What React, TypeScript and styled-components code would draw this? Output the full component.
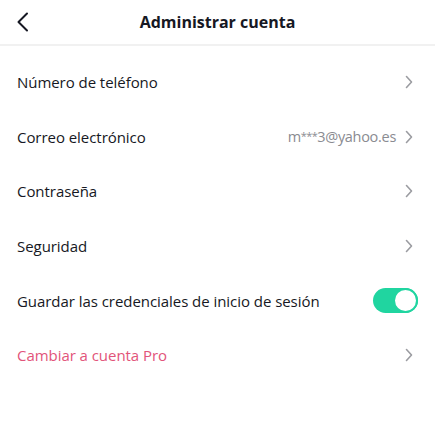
import React from "react";
import styled, { createGlobalStyle } from "styled-components";

const Global = createGlobalStyle`
  html, body { margin: 0; padding: 0; background: #fff; }
  body { font-family: "Open Sans", "Noto Sans", sans-serif; -webkit-font-smoothing: antialiased; }
`;

const Page = styled.div`
  width: 435px;
  height: 445px;
  background: #fff;
  display: flex;
  flex-direction: column;
`;

const Header = styled.header`
  height: 44px;
  display: grid;
  grid-template-columns: 48px 1fr 48px;
  align-items: center;
  border-bottom: 2px solid #f1f1f1;
`;

const BackButton = styled.button`
  border: 0;
  background: none;
  padding: 0 0 0 16px;
  height: 44px;
  display: flex;
  align-items: center;
  color: #161823;
`;

const Title = styled.h1`
  margin: 0;
  text-align: center;
  font-size: 16px;
  font-weight: 700;
  color: #161823;
`;

const List = styled.div`
  display: flex;
  flex-direction: column;
  padding-top: 9px;
`;

const Row = styled.div`
  height: 54.6px;
  display: flex;
  align-items: center;
  padding: 0 22px 0 17px;
`;

const Label = styled.span<{ $accent?: boolean }>`
  flex: 1;
  font-size: 15px;
  color: ${(p) => (p.$accent ? "#e2547a" : "#161823")};
  letter-spacing: -0.05px;
`;

const Value = styled.span`
  font-size: 14.5px;
  color: #8a8b91;
  margin-right: 9px;
  letter-spacing: -0.3px;
`;

const Stars = styled.span`
  font-size: 11px;
  letter-spacing: -0.6px;
  vertical-align: 2px;
`;

const Chevron = styled.svg`
  width: 8px;
  height: 14px;
  flex: none;
`;

const Toggle = styled.div`
  width: 45px;
  height: 25px;
  border-radius: 13px;
  background: #20d5a0;
  display: flex;
  align-items: center;
  justify-content: flex-end;
  box-sizing: border-box;
  margin-right: -5px;
`;

const Knob = styled.div`
  width: 25px;
  height: 25px;
  border-radius: 50%;
  background: #fff;
  border: 2px solid #20d5a0;
  box-sizing: border-box;
`;

const RightChevron = () => (
  <Chevron viewBox="0 0 8 14">
    <path d="M1.5 1.5 L6.5 7 L1.5 12.5" fill="none" stroke="#9b9ca1" strokeWidth="1.6" strokeLinecap="round" strokeLinejoin="round" />
  </Chevron>
);

const rows: { label: string; value?: React.ReactNode; accent?: boolean; toggle?: boolean }[] = [
  { label: "Número de teléfono" },
  {
    label: "Correo electrónico",
    value: (
      <>
        m<Stars>***</Stars>3@yahoo.es
      </>
    ),
  },
  { label: "Contraseña" },
  { label: "Seguridad" },
  { label: "Guardar las credenciales de inicio de sesión", toggle: true },
  { label: "Cambiar a cuenta Pro", accent: true },
];

export default function App() {
  return (
    <Page>
      <Global />
      <Header>
        <BackButton aria-label="Atrás">
          <svg width="14" height="20" viewBox="0 0 14 20">
            <path d="M11 1.5 L2.5 10 L11 18.5" fill="none" stroke="#161823" strokeWidth="2" strokeLinecap="round" strokeLinejoin="round" />
          </svg>
        </BackButton>
        <Title>Administrar cuenta</Title>
        <span />
      </Header>
      <List>
        {rows.map((r) => (
          <Row key={r.label}>
            <Label $accent={r.accent}>{r.label}</Label>
            {r.value && <Value>{r.value}</Value>}
            {r.toggle ? (
              <Toggle>
                <Knob />
              </Toggle>
            ) : (
              <RightChevron />
            )}
          </Row>
        ))}
      </List>
    </Page>
  );
}
